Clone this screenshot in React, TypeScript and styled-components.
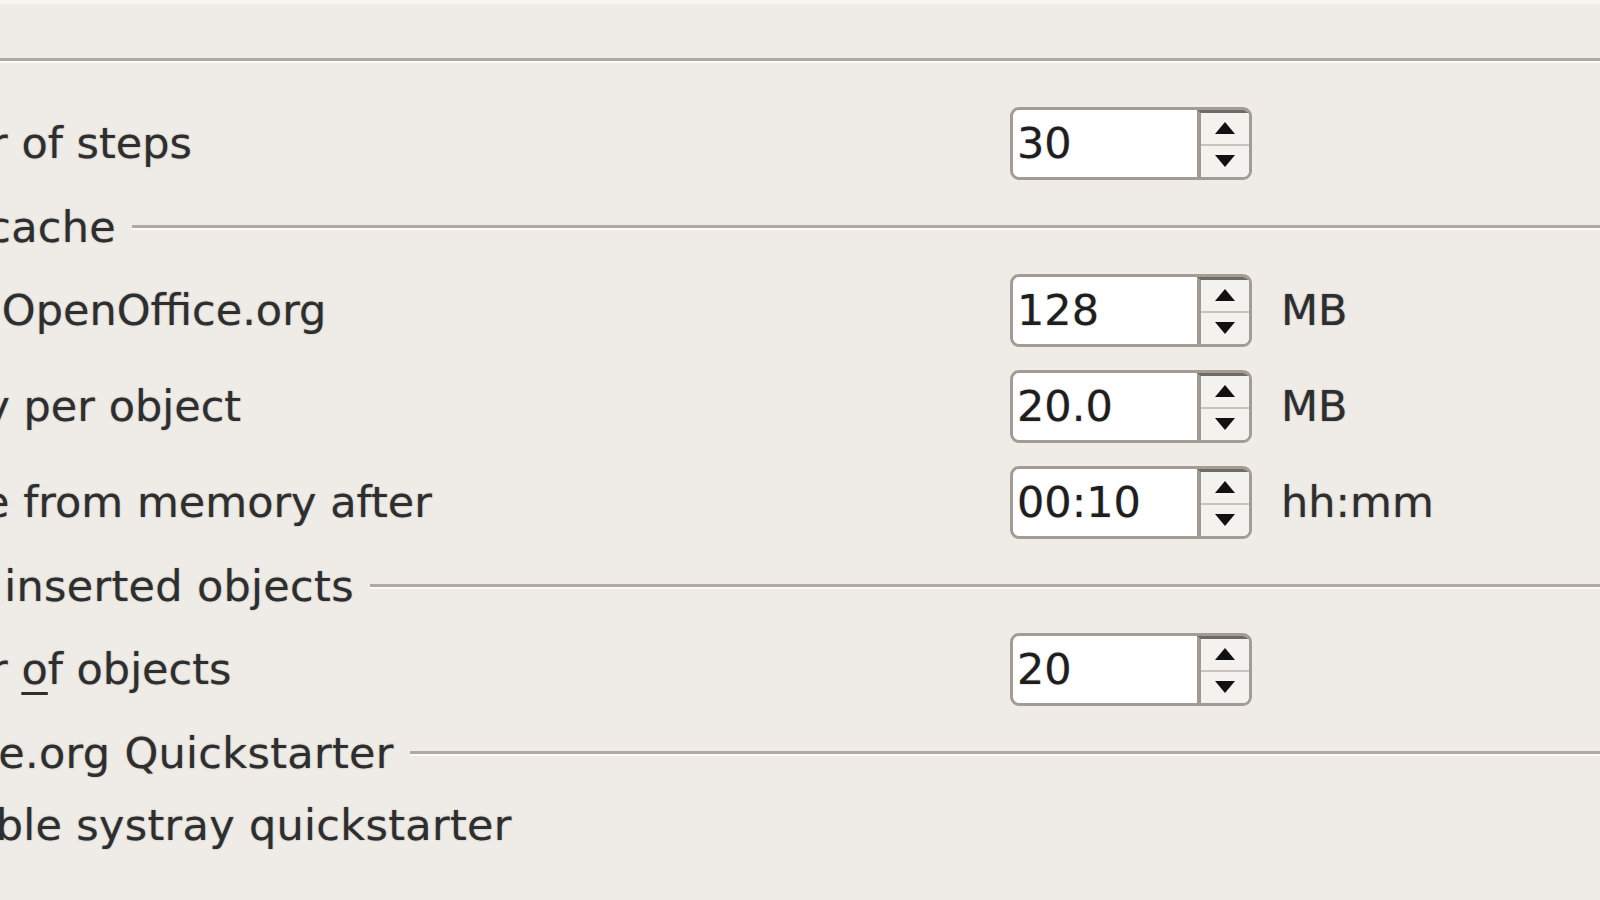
import React from 'react'
import styled, { createGlobalStyle } from 'styled-components'

const GlobalStyle = createGlobalStyle`
  html, body {
    margin: 0;
    padding: 0;
    background: #efebe7;
    overflow: hidden;
  }
`

const Page = styled.div`
  width: 1600px;
  height: 900px;
  overflow: hidden;
  background: #efebe7;
  border-top: 4px solid #f8f6f4;
  box-sizing: border-box;
  font-family: "DejaVu Sans", "Liberation Sans", sans-serif;
  font-size: 43px;
  color: #2e2e2e;
  text-shadow: 0 0 1.5px rgba(40, 40, 40, 0.45);
`

// the dialog is wider than the view, its left part is cut off
const Panel = styled.div`
  margin-left: -219px;
  width: 1819px;
  padding-top: 34px;
  display: flex;
  flex-direction: column;
  gap: 24px;
`

const Section = styled.div`
  display: flex;
  flex-direction: column;
  gap: 20px;
`

const Heading = styled.div`
  height: 44px;
  display: flex;
  align-items: center;
  gap: 16px;
  white-space: nowrap;
  letter-spacing: 0.3px;
  margin-bottom: 3px;
`

const Rule = styled.div`
  flex: 1;
  height: 0;
  border-top: 3px solid #b0a9a1;
  border-bottom: 2px solid #fbfaf8;
`

const Row = styled.div`
  height: 76px;
  display: grid;
  grid-template-columns: 1229px 242px auto;
  align-items: center;
`

const Label = styled.div`
  padding-left: 54px;
  white-space: nowrap;
`

const Mnemonic = styled.span`
  text-decoration: underline;
  text-underline-offset: 8px;
  text-decoration-thickness: 3px;
`

const Spin = styled.div`
  width: 242px;
  height: 73px;
  box-sizing: border-box;
  border: 3px solid #a39c94;
  border-radius: 9px;
  background: #ffffff;
  display: flex;
  overflow: hidden;
`

const SpinText = styled.div`
  flex: 1;
  display: flex;
  align-items: center;
  padding-left: 4px;
  color: #1e1e1e;
`

const SpinButtons = styled.div`
  width: 48px;
  border-left: 4px solid #a09991;
  border-top: 3px solid #6f6a64;
  background: #f4f2ef;
  display: flex;
  flex-direction: column;
`

const SpinHalf = styled.div<{ $top?: boolean }>`
  flex: 1;
  display: flex;
  align-items: center;
  justify-content: center;
  border-bottom: ${p => (p.$top ? '2px solid #c9c3bc' : 'none')};
`

const Unit = styled.div`
  margin-left: 29px;
  white-space: nowrap;
`

const CheckRow = styled.div`
  height: 44px;
  margin-top: 5px;
  display: flex;
  align-items: center;
  gap: 37px;
  padding-left: 54px;
  white-space: nowrap;
  letter-spacing: 0.3px;
`

const CheckBox = styled.div`
  width: 42px;
  height: 42px;
  box-sizing: border-box;
  border: 3px solid #a39c94;
  border-radius: 4px;
  background: #fff;
`

function Arrow({ up }: { up?: boolean }) {
  return (
    <svg width="20" height="12" viewBox="0 0 20 12">
      {up ? <polygon points="10,0 20,12 0,12" fill="#111" /> : <polygon points="0,0 20,0 10,12" fill="#111" />}
    </svg>
  )
}

function SpinField({ value }: { value: string }) {
  return (
    <Spin>
      <SpinText>{value}</SpinText>
      <SpinButtons>
        <SpinHalf $top>
          <Arrow up />
        </SpinHalf>
        <SpinHalf>
          <Arrow />
        </SpinHalf>
      </SpinButtons>
    </Spin>
  )
}

function SectionHeading({ title }: { title: string }) {
  return (
    <Heading>
      <span>{title}</span>
      <Rule />
    </Heading>
  )
}

function App() {
  return (
    <Page>
      <GlobalStyle />
      <Panel>
        <Section>
          <SectionHeading title="Undo" />
          <Row>
            <Label>Number of steps</Label>
            <SpinField value="30" />
          </Row>
        </Section>
        <Section>
          <SectionHeading title="Graphics cache" />
          <Row>
            <Label>Use for OpenOffice.org</Label>
            <SpinField value="128" />
            <Unit>MB</Unit>
          </Row>
          <Row>
            <Label>Memory per object</Label>
            <SpinField value="20.0" />
            <Unit>MB</Unit>
          </Row>
          <Row>
            <Label>Remove from memory after</Label>
            <SpinField value="00:10" />
            <Unit>hh:mm</Unit>
          </Row>
        </Section>
        <Section>
          <SectionHeading title="Cache for inserted objects" />
          <Row>
            <Label>
              Number <Mnemonic>o</Mnemonic>f objects
            </Label>
            <SpinField value="20" />
          </Row>
        </Section>
        <Section>
          <SectionHeading title="OpenOffice.org Quickstarter" />
          <CheckRow>
            <CheckBox />
            <span>Enable systray quickstarter</span>
          </CheckRow>
        </Section>
      </Panel>
    </Page>
  )
}

export default App
